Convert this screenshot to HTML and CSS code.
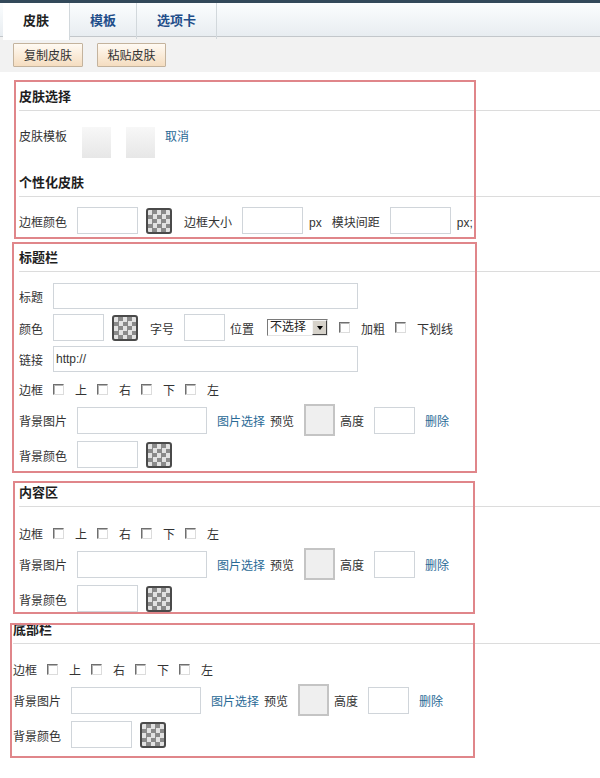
FILE: index.html
```html
<!DOCTYPE html>
<html lang="zh-CN">
<head>
    <meta charset="UTF-8">
    <title>皮肤设置</title>
    <link rel="stylesheet" href="styles.css">
</head>
<body>
    <div class="tabs">
        <div class="tab active">皮肤</div>
        <div class="tab">模板</div>
        <div class="tab tab-wide">选项卡</div>
    </div>

    <div class="toolbar">
        <button class="btn">复制皮肤</button>
        <button class="btn">粘贴皮肤</button>
    </div>

    <!-- skin choice -->
    <div class="panel" id="p-skin">
        <div class="sec-title">皮肤选择</div>
        <div class="row row-skin">
            <span>皮肤模板</span>
            <span class="thumb"></span>
            <span class="thumb"></span>
            <a class="link" href="#">取消</a>
        </div>
        <div class="sec-title">个性化皮肤</div>
        <div class="row row-frame">
            <span>边框颜色</span>
            <input type="text" class="txt w61">
            <span class="swatch"></span>
            <span>边框大小</span>
            <input type="text" class="txt w61">
            <span class="unit">px</span>
            <span>模块间距</span>
            <input type="text" class="txt w61">
            <span class="unit">px;</span>
        </div>
    </div>

    <!-- title bar -->
    <div class="panel" id="p-title">
        <div class="sec-title">标题栏</div>
        <div class="row">
            <span>标题</span>
            <input type="text" class="txt long">
        </div>
        <div class="row">
            <span>颜色</span>
            <input type="text" class="txt w51">
            <span class="swatch"></span>
            <span>字号</span>
            <input type="text" class="txt w41">
            <span class="tight">位置</span>
            <span class="select"><span class="select-text">不选择</span><span class="select-btn"></span></span>
            <input type="checkbox" class="cb">
            <span>加粗</span>
            <input type="checkbox" class="cb">
            <span>下划线</span>
        </div>
        <div class="row">
            <span>链接</span>
            <input type="text" class="txt long" value="http://">
        </div>
        <div class="row row-edges">
            <span>边框</span>
            <input type="checkbox" class="cb"><span>上</span>
            <input type="checkbox" class="cb"><span>右</span>
            <input type="checkbox" class="cb"><span>下</span>
            <input type="checkbox" class="cb"><span>左</span>
        </div>
        <div class="row">
            <span>背景图片</span>
            <input type="text" class="txt w130">
            <a class="link" href="#">图片选择</a>
            <span class="tight">预览</span>
            <span class="preview"></span>
            <span class="tight">高度</span>
            <input type="text" class="txt w41">
            <a class="link" href="#">删除</a>
        </div>
        <div class="row">
            <span>背景颜色</span>
            <input type="text" class="txt w61">
            <span class="swatch"></span>
        </div>
    </div>

    <!-- content area -->
    <div class="panel" id="p-content">
        <div class="sec-title">内容区</div>
        <div class="row row-edges">
            <span>边框</span>
            <input type="checkbox" class="cb"><span>上</span>
            <input type="checkbox" class="cb"><span>右</span>
            <input type="checkbox" class="cb"><span>下</span>
            <input type="checkbox" class="cb"><span>左</span>
        </div>
        <div class="row">
            <span>背景图片</span>
            <input type="text" class="txt w130">
            <a class="link" href="#">图片选择</a>
            <span class="tight">预览</span>
            <span class="preview"></span>
            <span class="tight">高度</span>
            <input type="text" class="txt w41">
            <a class="link" href="#">删除</a>
        </div>
        <div class="row">
            <span>背景颜色</span>
            <input type="text" class="txt w61">
            <span class="swatch"></span>
        </div>
    </div>

    <!-- footer bar -->
    <div class="panel" id="p-footer">
        <div class="sec-title">底部栏</div>
        <div class="row row-edges">
            <span>边框</span>
            <input type="checkbox" class="cb"><span>上</span>
            <input type="checkbox" class="cb"><span>右</span>
            <input type="checkbox" class="cb"><span>下</span>
            <input type="checkbox" class="cb"><span>左</span>
        </div>
        <div class="row">
            <span>背景图片</span>
            <input type="text" class="txt w130">
            <a class="link" href="#">图片选择</a>
            <span class="tight">预览</span>
            <span class="preview"></span>
            <span class="tight">高度</span>
            <input type="text" class="txt w41">
            <a class="link" href="#">删除</a>
        </div>
        <div class="row">
            <span>背景颜色</span>
            <input type="text" class="txt w61">
            <span class="swatch"></span>
        </div>
    </div>
</body>
</html>
```

FILE: styles.css
```css
body {
    margin: 0;
    font: 12px/20px "Liberation Sans", "Noto Sans CJK SC", sans-serif;
    color: #333;
    background: #fff;
    padding-bottom: 20px;
}

/* Tabs and toolbar */

.tabs {
    display: flex;
    height: 33px;
    padding-left: 3px;
    border-top: 3px solid #33495a;
    border-bottom: 1px solid #c3c7cb;
    background: linear-gradient(#fbfdfe, #e8edf1);
}

.tab {
    width: 66px;
    height: 33px;
    border-right: 1px solid #d2d8dc;
    box-sizing: content-box;
    text-align: center;
    font-size: 13px;
    font-weight: bold;
    line-height: 30px;
    padding-top: 3px;
    color: #1f4e8a;
}

.tab-wide {
    width: 79px;
}

.tab.active {
    height: 34px;
    background: #fff;
    color: #222;
}

.toolbar {
    display: flex;
    gap: 14px;
    height: 29px;
    padding: 6px 0 0 13px;
    background: #f2f2f2;
}

.btn {
    width: 70px;
    height: 24px;
    padding: 0;
    border: 1px solid #c4b39d;
    border-radius: 1px;
    background: linear-gradient(#fffaf3, #f5ddc0);
    font: 12px/20px "Noto Sans CJK SC", sans-serif;
    color: #333;
}

.btn + .btn {
    width: 69px;
}

/* Panels */

.panel {
    display: flow-root;
    position: relative;
    padding-left: 19px;
}

/* red marking boxes drawn over the panels */
.panel::after {
    content: "";
    position: absolute;
    box-sizing: border-box;
    border: 2px solid #e0868a;
    pointer-events: none;
}

#p-skin::after {
    top: 8px;
    left: 14px;
    width: 462px;
    height: 159px;
}

#p-title::after {
    top: 8px;
    left: 12px;
    width: 465px;
    height: 231px;
}

#p-content::after {
    top: 13px;
    left: 13px;
    width: 462px;
    height: 133px;
}

#p-footer {
    padding-left: 13px;
}

#p-footer::after {
    top: 11px;
    left: 10px;
    width: 465px;
    height: 135px;
}

.sec-title {
    height: 26px;
    line-height: 26px;
    margin-top: 11px;
    border-bottom: 1px solid #dcdcdc;
    font-size: 13px;
    font-weight: bold;
    color: #1e1e1e;
}

#p-skin .sec-title,
#p-content .sec-title {
    margin-top: 12px;
}

#p-footer .sec-title {
    margin-top: 5px;
}

/* Rows */

.row {
    display: flex;
    align-items: center;
    gap: 10px;
    margin-top: 5px;
    white-space: nowrap;
}

/* plain labels sit a little low next to the inputs */
.row > span:not([class]),
.row > .tight,
.row > .unit,
.row > .link {
    padding-top: 4px;
}

.sec-title + .row {
    margin-top: 11px;
}

#p-skin .row-skin {
    margin-top: 16px;
    align-items: flex-start;
}

#p-skin .row-skin > * {
    padding-top: 0;
}

#p-skin .row-frame {
    margin-top: 10px;
}

.row-edges {
    height: 20px;
}

#p-title .row-edges {
    margin-top: 7px;
    margin-bottom: 2px;
}

#p-content .row-edges {
    margin-top: 16px;
}

#p-footer .row-edges {
    margin-top: 15px;
}

.tight {
    margin-left: -5px;
}

.unit {
    margin-left: -4px;
}

.link {
    color: #2a6a96;
    text-decoration: none;
}

/* Form bits */

.txt {
    box-sizing: border-box;
    height: 27px;
    margin: 0;
    padding: 0 2px;
    border: 1px solid #d0d5da;
    background: #fff;
    font: 12px "Liberation Sans", sans-serif;
    color: #333;
}

.w41 { width: 41px; }
.w51 { width: 51px; }
.w61 { width: 61px; }
.w130 { width: 130px; }

.long {
    width: 305px;
    height: 26px;
}

.swatch {
    width: 26px;
    height: 26px;
    box-sizing: border-box;
    margin: 0 2px 0 -2px;
    border: 2px solid #4a4a4a;
    border-radius: 3px;
    background: conic-gradient(#8a8a8a 25%, #e2e2e2 0 50%, #8a8a8a 0 75%, #e2e2e2 0) 0 0 / 9px 9px;
}

.thumb {
    width: 29px;
    height: 31px;
    margin-left: 5px;
    background: linear-gradient(#f7f7f7, #e7e7e7);
}

.preview {
    width: 31px;
    height: 32px;
    box-sizing: border-box;
    border: 2px solid #c4c4c4;
    background: #efefef;
}

.cb {
    appearance: none;
    width: 11px;
    height: 11px;
    margin: 0 1px 0 0;
    box-sizing: border-box;
    border: 1px solid;
    border-color: #6f6f6f #dcdcdc #dcdcdc #6f6f6f;
    box-shadow: inset 1px 1px 0 #b4b4b4;
    background: #fff;
}

.select {
    display: flex;
    width: 61px;
    height: 17px;
    box-sizing: border-box;
    margin: 0 1px 0 3px;
    border: 1px solid;
    border-color: #7a7a7a #e4e4e4 #e4e4e4 #7a7a7a;
    background: #fff;
}

.select-text {
    flex: 1;
    padding-left: 2px;
    line-height: 15px;
    color: #222;
}

.select-btn {
    display: flex;
    align-items: center;
    justify-content: center;
    width: 15px;
    box-sizing: border-box;
    border: 1px solid;
    border-color: #f4f4f4 #404040 #404040 #f4f4f4;
    background: #d6d2ca;
}

.select-btn::after {
    content: "";
    border-left: 3px solid transparent;
    border-right: 3px solid transparent;
    border-top: 4px solid #000;
}
```
